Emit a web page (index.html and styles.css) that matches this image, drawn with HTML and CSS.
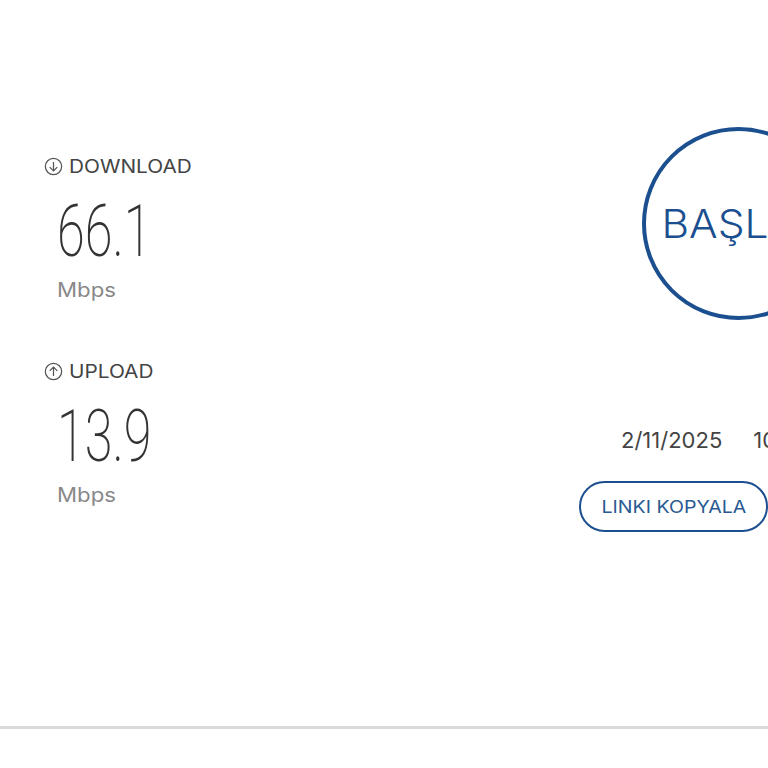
FILE: index.html
```html
<!DOCTYPE html>
<html lang="tr">
<head>
  <meta charset="UTF-8" />
  <meta name="viewport" content="width=device-width,initial-scale=1.0" />
  <title>Hız Testi</title>
  <link rel="stylesheet" href="styles.css">
</head>
<body>
  <main class="test">
    <section class="stats">
      <div class="stat">
        <h2 class="stat-label">
          <svg class="stat-icon" viewBox="0 0 20 20" aria-hidden="true">
            <circle cx="10" cy="10" r="8.6"/>
            <path d="M10 5.2V14.4M6 10.6L10 14.6L14 10.6"/>
          </svg>
          <span class="stat-name">DOWNLOAD</span>
        </h2>
        <div class="stat-value">66.1</div>
        <div class="stat-unit">Mbps</div>
      </div>
      <div class="stat">
        <h2 class="stat-label">
          <svg class="stat-icon" viewBox="0 0 20 20" aria-hidden="true">
            <circle cx="10" cy="10" r="8.6"/>
            <path d="M10 14.8V5.6M6 9.4L10 5.4L14 9.4"/>
          </svg>
          <span class="stat-name">UPLOAD</span>
        </h2>
        <div class="stat-value">13.9</div>
        <div class="stat-unit">Mbps</div>
      </div>
    </section>

    <section class="run">
      <button class="start"><span class="start-text">BAŞLA</span></button>
      <div class="when">
        <span>2/11/2025</span>
        <span>10:42:18</span>
      </div>
      <div class="actions">
        <button class="pill"><span class="pill-text">LINKI KOPYALA</span></button>
        <button class="pill pill-short"><span class="pill-text">PAYLAŞ</span></button>
      </div>
    </section>
  </main>
  <hr class="rule">
</body>
</html>
```

FILE: styles.css
```css
* { margin: 0; padding: 0; box-sizing: border-box; }
html, body { height: 100%; overflow: hidden; }
body {
  font-family: Inter, "Open Sans", Arial, sans-serif;
  background: #fff;
  color: #444;
  width: 768px;
}
.test {
  display: flex;
  justify-content: space-between;
  height: 726px;
  padding: 127px 0 0 44px;
  overflow: hidden;
}
.stats {
  display: flex;
  flex-direction: column;
  gap: 57px;
  padding-top: 27px;
}
.stat-label {
  display: flex;
  align-items: center;
  gap: 6px;
  height: 24px;
  font-size: 18px;
  font-weight: 400;
  color: #444;
}
.stat-name {
  display: inline-block;
  transform: scaleX(1.155);
  transform-origin: left center;
}
.stat-icon {
  width: 19px;
  height: 19px;
  fill: none;
  stroke: #555;
  stroke-width: 1.3;
}
.stat-value {
  margin: 19px 0 0 13px;
  width: 100px;
  height: 68px;
  font-family: Roboto, sans-serif;
  font-size: 73px;
  line-height: 68px;
  font-weight: 200;
  color: #333;
  transform: scaleX(0.69);
  transform-origin: left center;
  white-space: nowrap;
}
.stat-unit {
  margin: 13px 0 0 13px;
  font-size: 20px;
  line-height: 24px;
  color: #888;
  transform: scaleX(1.11);
  transform-origin: left center;
}
.run {
  flex: none;
  width: 318px;
  margin-right: -129px;
  display: flex;
  flex-direction: column;
  align-items: center;
}
.start {
  flex: none;
  width: 193px;
  height: 193px;
  border: 4px solid #1b4f8f;
  border-radius: 50%;
  background: #fff;
  color: #1b4f8f;
  font-family: Inter, sans-serif;
  font-size: 39px;
  font-weight: 300;
}
.start-text {
  display: inline-block;
  margin-right: 18px;
  transform: scaleX(1.09);
}
.when {
  display: flex;
  gap: 31px;
  width: 234px;
  margin-top: 105px;
  font-size: 22px;
  line-height: 30px;
  color: #444;
  white-space: nowrap;
}
.actions {
  display: flex;
  gap: 16px;
  width: 100%;
  margin-top: 26px;
}
.pill {
  flex: none;
  width: 189px;
  height: 51px;
  border: 2.5px solid #1b4f8f;
  border-radius: 26px;
  background: #fff;
  color: #2a5a92;
  font-family: Inter, sans-serif;
  font-size: 17px;
  white-space: nowrap;
}
.pill-text {
  display: inline-block;
  transform: scaleX(1.15);
}
.pill-short { width: 113px; }
.rule {
  border: 0;
  height: 3px;
  background: #d9d9d9;
}
```
